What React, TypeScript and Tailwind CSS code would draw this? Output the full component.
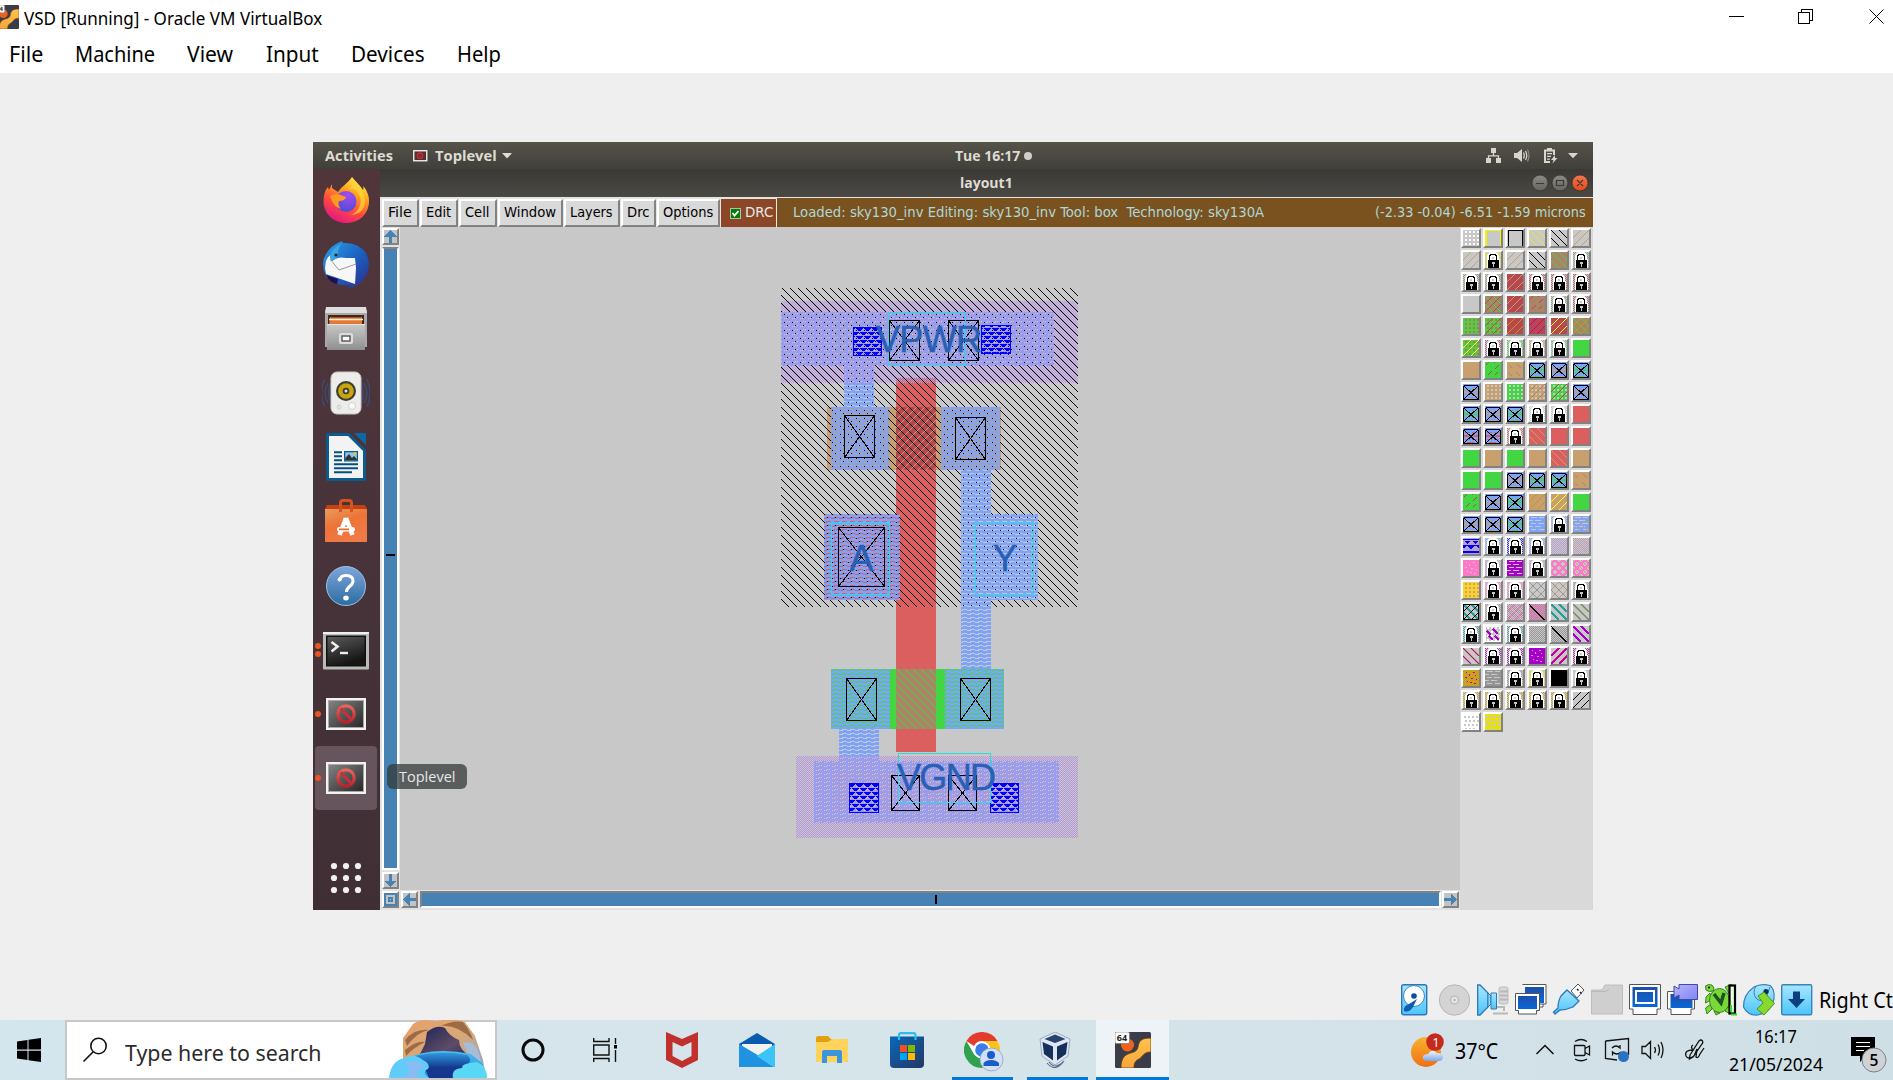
import React, { useLayoutEffect, useRef, useState } from "react";

/* ---------- shared helpers ---------- */

// One line of text stretched to an exact width.
function Fit({ w, className = "", children }: { w: number; className?: string; children: React.ReactNode }) {
  const ref = useRef<HTMLSpanElement>(null);
  const [k, setK] = useState(1);
  useLayoutEffect(() => {
    if (ref.current && ref.current.offsetWidth) setK(w / ref.current.offsetWidth);
  }, [w]);
  return (
    <span className={"inline-block shrink-0 text-left " + className} style={{ width: w }}>
      <span ref={ref} className="inline-block origin-left whitespace-nowrap" style={{ transform: `scaleX(${k})` }}>
        {children}
      </span>
    </span>
  );
}

const GREEN = "#42d742";
const TAN = "#c8a070";
const RED = "#dc5f5f";
const DARK = "#b84850";
const BROWN = "#a98467";
const BLUE = "#7ca4fc";
const GREY = "#c8c8c8";
const PURPLE = "#b696de";

function VBoxGuestIcon({ size, className = "" }: { size: number; className?: string }) {
  return (
    <svg width={size} height={size} viewBox="0 0 36 36" className={className}>
      <defs>
        <linearGradient id="gold" x1="0" y1="0" x2="0" y2="1">
          <stop offset="0" stopColor="#ffc24d" />
          <stop offset="1" stopColor="#f8a63c" />
        </linearGradient>
      </defs>
      <rect width="36" height="36" rx="1.5" fill="#3a3c47" />
      <circle cx="12.5" cy="13" r="6.5" fill="#f0621c" />
      <path d="M36 6C26 6 24 9 23 15C22 21 16 20 11 23C8 25 6 29 6 36H19C19 31 20 29 24 27C28 25 28 20 36 20Z" fill="url(#gold)" stroke="#6b3a12" strokeWidth=".8" />
      <rect x="0" y="0" width="14.5" height="11.5" rx="1.5" fill="#fff" stroke="#777" strokeWidth=".7" />
      <text x="1.8" y="9" fontSize="9" fontWeight="700" fontFamily="Open Sans, sans-serif" fill="#222">64</text>
    </svg>
  );
}

/* ---------- host window chrome ---------- */

function HostTitle() {
  return (
    <div className="flex h-[36px] items-start">
      <div className="mt-[5px] h-6 w-[19px] shrink-0 overflow-hidden">
        <VBoxGuestIcon size={24} className="-ml-[5px]" />
      </div>
      <Fit w={298} className="ml-[5px] mt-[5px] text-[17.5px] leading-[26px]">VSD [Running] - Oracle VM VirtualBox</Fit>
      <svg width="193" height="36" className="ml-auto" fill="none" stroke="#000" shapeRendering="crispEdges">
        <path d="M29 16.5H44" />
        <path d="M98.5 12.5H109.5V23.5H98.5Z M101.5 12V9.5H112.5V20.5H110" />
        <path d="M169.5 9.5L183.5 23.5M183.5 9.5L169.5 23.5" shapeRendering="auto" />
      </svg>
    </div>
  );
}

function HostMenu() {
  const items: [string, number, number][] = [
    ["File", 9, 34], ["Machine", 32, 80], ["View", 32, 46], ["Input", 33, 53], ["Devices", 32, 74], ["Help", 32, 44],
  ];
  return (
    <div className="flex h-[37px] items-center text-[21.5px]">
      {items.map(([t, gap, w]) => (
        <div key={t} className="flex" style={{ marginLeft: gap }}>
          <Fit w={w} className="leading-[28px] -mt-[2px]">{t}</Fit>
        </div>
      ))}
    </div>
  );
}

/* ---------- guest top bars ---------- */

function GuestTop() {
  return (
    <div className="grid h-[27px] grid-cols-[642px_77px_1fr] items-center bg-linear-to-b from-[#56534a] to-[#403f3a] font-['Open_Sans','Noto_Sans',sans-serif] text-[14px] font-bold text-[#dfdbd2]">
      <div className="flex items-center">
        <Fit w={68} className="ml-3 leading-5">Activities</Fit>
        <svg width="15" height="12" className="ml-5">
          <rect x=".75" y=".75" width="13" height="10" fill="#4a3434" stroke="#eee" strokeWidth="1.4" />
          <circle cx="7" cy="5.7" r="2.6" fill="none" stroke="#d0282c" strokeWidth="1.5" />
          <path d="M5.5 4L9 7.5" stroke="#d0282c" />
        </svg>
        <Fit w={62} className="ml-[7px] leading-5">Toplevel</Fit>
        <svg width="10" height="6" className="ml-[5px]"><path d="M0 0H10L5 5.5Z" fill="#dfdbd2" /></svg>
      </div>
      <div className="flex w-[77px] items-center">
        <Fit w={65} className="leading-5">Tue 16:17</Fit>
        <span className="ml-1 h-2 w-2 rounded-full bg-[#d0cdc6]" />
      </div>
      <div className="flex items-center justify-end pr-[15px]">
        <svg width="92" height="17" viewBox="0 0 92 17" fill="#d8d5ce">
          <path d="M5 1h5v5H5zM0 11h5v5H0zM10 11h5v5h-5z" />
          <path d="M7.5 6v3.500M2.500 11V8.800H12.500V11" fill="none" stroke="#d8d5ce" strokeWidth="1.300" />
          <path d="M28 6h3l5-4v13l-5-4h-3z" />
          <path d="M37.500 5.500q1.500 3 0 6M39.500 4q2.500 4.500 0 9" fill="none" stroke="#d8d5ce" strokeWidth="1.300" />
          <path d="M41.500 2.500q3 6 0 12" fill="none" stroke="#8a877f" strokeWidth="1.200" />
          <path d="M58 2.500h3V1h5v1.500h3V8h-2V4.500h-7V14h4v2h-6z M61 6h5v1.200h-5z M61 8.800h4V10h-4z M61 11.600h3v1.200h-3z M69 8l-4 5h2.500l-1 3.500 5-5.500h-2.500z" />
          <path d="M82 6H92L87 11.200Z" />
        </svg>
      </div>
    </div>
  );
}

function WinButtons() {
  return (
    <svg width="60" height="22" viewBox="1530 172 60 22" fill="none">
      <defs>
        <linearGradient id="wb" x1="0" y1="0" x2="0" y2="1"><stop offset="0" stopColor="#8b8983" /><stop offset="1" stopColor="#66645f" /></linearGradient>
        <linearGradient id="wr" x1="0" y1="0" x2="0" y2="1"><stop offset="0" stopColor="#f4774e" /><stop offset="1" stopColor="#e2491a" /></linearGradient>
      </defs>
      <circle cx="1540" cy="183" r="8" fill="url(#wb)" stroke="#33322e" strokeWidth=".8" />
      <circle cx="1560" cy="183" r="8" fill="url(#wb)" stroke="#33322e" strokeWidth=".8" />
      <circle cx="1580" cy="183" r="8" fill="url(#wr)" stroke="#33322e" strokeWidth=".8" />
      <path d="M1536 183.500h8M1556.500 180.500h7v5h-7zM1577 180l6 6M1583 180l-6 6" stroke="#3a3935" strokeWidth="1.200" />
    </svg>
  );
}

/* ---------- dock ---------- */

function ToplevelIcon() {
  return (
    <svg width="48" height="48">
      <defs>
        <linearGradient id="tl" x1="0" y1="0" x2="1" y2="1"><stop offset="0" stopColor="#828282" /><stop offset="1" stopColor="#282828" /></linearGradient>
        <linearGradient id="no" x1="0" y1="0" x2="0" y2="1"><stop offset="0" stopColor="#e8665a" /><stop offset="1" stopColor="#c01f2e" /></linearGradient>
      </defs>
      <rect x="4" y="8" width="40" height="32" fill="#f2f2f0" />
      <rect x="6" y="10" width="36" height="28" fill="#a9a9a9" />
      <rect x="7" y="11" width="34" height="26" fill="url(#tl)" />
      <circle cx="24" cy="24" r="8.200" fill="none" stroke="url(#no)" strokeWidth="3.200" />
      <path d="M18.500 18.500l11 11" stroke="#c92f38" strokeWidth="3" />
    </svg>
  );
}

const dockIcons: { lift: string; dots: number; icon: React.ReactNode }[] = [
  { lift: "pb-1", dots: 0, icon: (
    <svg width="48" height="48">
      <defs>
        <linearGradient id="ff" x1=".8" y1="0" x2=".3" y2="1"><stop offset="0" stopColor="#fff44f" /><stop offset=".35" stopColor="#ffa01e" /><stop offset=".65" stopColor="#ff4a3d" /><stop offset="1" stopColor="#e31587" /></linearGradient>
        <radialGradient id="fp" cx=".6" cy=".2" r=".9"><stop offset="0" stopColor="#a24cf5" /><stop offset="1" stopColor="#4a4ad0" /></radialGradient>
      </defs>
      <path d="M30 1C33 5 38 9 41 14C42 12 41 10 41 10C45 14 47 20 47 25C47 38 37 47 24.500 47C11 47 1.500 37 1.500 25C1.500 19 3 14 6 11L7 14L10 8V12L16 16C20 10 25 8 30 1Z" fill="url(#ff)" />
      <circle cx="24" cy="25.500" r="10.500" fill="url(#fp)" />
      <path d="M8 20Q14 17 19 19L24 21Q23 25 17 25Q15 28 19 33Q11 31 8 20Z" fill="#ff9a1f" />
      <path d="M24 14Q33 9 38 21Q41 33 29 39Q42 38 43 26Q43 14 33 5Q30 12 24 14Z" fill="#ffd83a" opacity=".7" />
    </svg>) },
  { lift: "pb-0.5", dots: 0, icon: (
    <svg width="48" height="48">
      <defs><linearGradient id="tb" x1="0" y1="0" x2="1" y2="1"><stop offset="0" stopColor="#2aa4e8" /><stop offset=".5" stopColor="#1c64c4" /><stop offset="1" stopColor="#2a2c8c" /></linearGradient></defs>
      <path d="M20 0L21 2Q36 1 44 12Q50 24 44 35Q37 47 24 47L30 44Q12 46 4 35Q-2 22 4 13Q8 5 20 0Z" fill="url(#tb)" />
      <path d="M4 34Q8 42 15 43L16 38Z" fill="#1d0f52" />
      <path d="M4 20Q6 15 9 14L10 20Q16 15 24 17L33 17L34 27L33 43L4 33L3 27Z" fill="#f7f7f7" />
      <path d="M8 18L17 29L34 23" fill="none" stroke="#9a9a9a" />
      <path d="M8 16Q8 8 20 2Q15 8 16 15Q12 20 9 20Z" fill="#3aa6e4" />
      <circle cx="14" cy="14" r="1.600" fill="#222" />
    </svg>) },
  { lift: "pb-0.5", dots: 0, icon: (
    <svg width="48" height="48">
      <defs><linearGradient id="fc" x1="0" y1="0" x2="0" y2="1"><stop offset="0" stopColor="#c9c9c9" /><stop offset="1" stopColor="#8f8f8f" /></linearGradient></defs>
      <path d="M5 3L6 2H42L45 6V42H3V6Z" fill="#a9a9a9" />
      <path d="M4 2H44L45 8H3Z" fill="#dedede" />
      <rect x="6" y="10" width="36" height="10" fill="#3a2a20" />
      <path d="M8 12H40V20H7Z" fill="#e07a35" /><path d="M7 14.500H41" stroke="#fff0dc" strokeWidth="1.500" /><path d="M9 12.500H39" stroke="#c04818" />
      <rect x="5" y="19" width="38" height="26" fill="url(#fc)" />
      <path d="M5 19.500H43" stroke="#e3e3e3" />
      <rect x="17" y="28" width="14" height="11" rx="2" fill="#ddd" />
      <rect x="20" y="31" width="8" height="5" fill="#fff" stroke="#555" strokeWidth="1.400" />
    </svg>) },
  { lift: "pb-0.5", dots: 0, icon: (
    <svg width="48" height="48">
      <path d="M6 14Q0 24 6 34M3 10Q-4 24 3 38M9 14Q4 24 9 34M42 14Q48 24 42 34M45 10Q51 24 45 38M39 14Q44 24 39 34" fill="none" stroke="#3d4a6c" strokeWidth="1.500" />
      <rect x="9" y="3" width="30" height="42" rx="6" fill="#ececea" stroke="#c9c9c5" />
      <circle cx="24" cy="22" r="10" fill="#3e3f35" /><circle cx="24" cy="22" r="7.800" fill="#c9a50e" /><circle cx="24" cy="22" r="3.300" fill="#3c3d38" /><circle cx="24" cy="22" r="1.500" fill="#ddd" />
      <circle cx="30" cy="37" r="3.500" fill="#fafafa" stroke="#d0d0cc" /><circle cx="17" cy="38" r="2" fill="#e2e2e0" stroke="#d0d0cc" />
    </svg>) },
  { lift: "pb-0.5", dots: 0, icon: (
    <svg width="48" height="48">
      <path d="M6 0H27L44 17V46Q44 48 42 48H6Q4 48 4 46V2Q4 0 6 0Z" fill="#0a5c8f" />
      <path d="M32 0H44V12Z" fill="#0b69a3" />
      <path d="M7 3H26L41 18V45H7Z" fill="#f3f3f3" />
      <path d="M12 19.200h8M12 23.200h8M12 27.200h8M12 31.200h24M12 35.200h24M12 39.200h18" stroke="#06507f" strokeWidth="2" />
      <rect x="22" y="18" width="14" height="10.500" fill="#0a5c8f" /><rect x="23.300" y="19.300" width="11.500" height="8" fill="#8ec7ea" />
      <path d="M23.300 27.300V25L27 21L30 25L32 23L34.800 26V27.300Z" fill="#333" /><circle cx="33" cy="20.500" r="1.500" fill="#e8c52c" />
    </svg>) },
  { lift: "pb-0.5", dots: 0, icon: (
    <svg width="48" height="48">
      <defs><linearGradient id="so" x1="0" y1="0" x2=".5" y2="1"><stop offset="0" stopColor="#e89b5c" /><stop offset=".5" stopColor="#ee7338" /><stop offset="1" stopColor="#f07a45" /></linearGradient></defs>
      <path d="M5 8H43L45 12H3Z" fill="#c4420f" />
      <rect x="3" y="12" width="42" height="33" fill="url(#so)" />
      <path d="M18.500 15V6Q18.500 3.500 21 3.500H27Q29.500 3.500 29.500 6V15" fill="none" stroke="#d4541f" strokeWidth="3" />
      <path d="M24 21L17.500 38M24 21L30.500 38" stroke="#fff" strokeWidth="4.500" />
      <rect x="15" y="30" width="18" height="4.600" rx="2.300" fill="#fff" /><rect x="17" y="31.500" width="10" height="1.700" fill="#ee6a2c" />
    </svg>) },
  { lift: "", dots: 0, icon: (
    <svg width="48" height="48">
      <defs><linearGradient id="hp" x1="0" y1="0" x2="0" y2="1"><stop offset="0" stopColor="#7fa6dc" /><stop offset="1" stopColor="#2c6c9f" /></linearGradient></defs>
      <circle cx="24" cy="24" r="19.500" fill="url(#hp)" stroke="#9cc0e6" strokeWidth="1" />
      <path d="M18 18Q18 13.500 24 13.500Q31 13.500 31 19Q31 22 27.500 24.500Q24.500 27 24.500 30" fill="none" stroke="#fff" strokeWidth="3" /><circle cx="17.600" cy="17.500" r="2" fill="#fff" />
      <ellipse cx="24" cy="36" rx="2.800" ry="2.500" fill="#fff" />
    </svg>) },
  { lift: "pt-px", dots: 2, icon: (
    <svg width="48" height="48">
      <defs><linearGradient id="te" x1="0" y1="0" x2=".4" y2="1"><stop offset="0" stopColor="#5a5a5a" /><stop offset="1" stopColor="#151515" /></linearGradient></defs>
      <rect x="1" y="5.500" width="46" height="37" rx="1" fill="#b9bcb6" /><path d="M1 6H47" stroke="#f0f0ee" strokeWidth="2" />
      <rect x="4" y="8.500" width="40" height="31" fill="#111" /><rect x="5.500" y="10" width="37" height="28" fill="url(#te)" />
      <path d="M9.500 15L15.500 19.500L9.500 24.500" fill="none" stroke="#eee" strokeWidth="2.600" /><path d="M18 26H26" stroke="#eee" strokeWidth="2.400" />
    </svg>) },
  { lift: "", dots: 1, icon: <ToplevelIcon /> },
  { lift: "", dots: 1, icon: <ToplevelIcon /> },
];

function Dock() {
  return (
    <div className="flex w-[67px] shrink-0 flex-col bg-linear-to-b from-[#50363b] via-[#48333a] to-[#3f2f35] pt-px">
      {dockIcons.map((d, i) => (
        <div key={i} className={"relative flex h-16 w-[62px] items-center justify-center rounded-[4px] ml-[2px] " + d.lift + (i === 9 ? " bg-[#67555d]" : "")}>
          <div className="absolute left-0 top-0 flex h-full flex-col items-center justify-center gap-[2px]">
            {Array.from({ length: d.dots }).map((_, k) => <span key={k} className="h-[6px] w-[6px] rounded-full bg-[#e95420]" />)}
          </div>
          {d.icon}
        </div>
      ))}
      <svg width="40" height="36" className="mt-[49px] ml-[13px]" fill="#f0f0f0">
        {[8, 20, 32].map((x) => [6, 18, 30].map((y) => <circle key={x + "-" + y} cx={x} cy={y + 1} r="3.100" />))}
      </svg>
    </div>
  );
}

/* ---------- layout drawing ---------- */

const px = (pts: [number, number, number?][]) => pts.map(([x, y, w = 1]) => `M${x} ${y}h${w}v1h${-w}z`).join("");
const diag = (off: number) => px(Array.from({ length: 8 }, (_, i) => [(i + off) % 8, i] as [number, number]));
const anti = (off: number) => px(Array.from({ length: 8 }, (_, i) => [(off - i + 16) % 8, i] as [number, number]));

function Metal({ x, y, w, h }: { x: number; y: number; w: number; h: number }) {
  return <rect x={x} y={y} width={w} height={h} fill="url(#m1)" />;
}
function Contact({ x, y, w, h }: { x: number; y: number; w: number; h: number }) {
  return <path d={`M${x + 0.5} ${y + 0.5}h${w - 1}v${h - 1}h${-(w - 1)}zl${w - 1} ${h - 1}M${x + w - 0.5} ${y + 0.5}L${x + 0.5} ${y + h - 0.5}`} fill="none" stroke="#000" />;
}
function Via({ x, y, w, h }: { x: number; y: number; w: number; h: number }) {
  return <rect x={x + 0.5} y={y + 0.5} width={w - 1} height={h - 1} fill="url(#via)" stroke="#0000ff" />;
}

function Canvas() {
  const label = { fontFamily: "Liberation Sans, Arial, sans-serif", fontSize: 36, fill: "#2a5fb6", stroke: "#2a5fb6", strokeWidth: 0.5 };
  return (
    <svg width="1060" height="663" viewBox="400 227 1060 663" className="block bg-[#c8c8c8]" shapeRendering="crispEdges">
      <defs>
        <pattern id="hatch" width="8" height="8" patternUnits="userSpaceOnUse"><path d={diag(6)} fill="#000" /></pattern>
        <pattern id="gdiag" width="8" height="8" patternUnits="userSpaceOnUse"><path d={diag(4)} fill={GREEN} /></pattern>
        <pattern id="tdiag" width="8" height="8" patternUnits="userSpaceOnUse"><path d={anti(3)} fill={TAN} /></pattern>
        <pattern id="m1" width="8" height="4" patternUnits="userSpaceOnUse">
          <path d={px([[0, 0, 8], [0, 1, 2], [7, 1, 1], [3, 2, 4], [0, 3, 8]])} fill={BLUE} />
        </pattern>
        <pattern id="m2" width="2" height="2" patternUnits="userSpaceOnUse"><path d={px([[1, 0], [0, 1]])} fill={PURPLE} /></pattern>
        <pattern id="via" width="8" height="8" patternUnits="userSpaceOnUse">
          <path d={px([[0, 0, 7], [1, 1, 5], [2, 2, 3], [4, 4, 4], [0, 4, 3], [5, 5, 3], [0, 5, 2], [6, 6, 2], [0, 6, 1]])} fill="#0000ff" />
        </pattern>
        <pattern id="gd" width="8" height="8" patternUnits="userSpaceOnUse"><path d={px([[1, 1], [5, 5]])} fill={GREEN} /></pattern>
        <pattern id="td" width="6" height="6" patternUnits="userSpaceOnUse"><path d={px([[1, 1], [4, 4]])} fill="#d89a80" /></pattern>
      </defs>
      <rect x="896" y="378" width="40" height="374" fill={RED} />
      <rect x="824" y="514" width="76" height="86" fill={RED} />
      <rect x="827" y="407" width="174" height="63" fill={TAN} />
      <rect x="896" y="407" width="40" height="63" fill={DARK} />
      <rect x="896" y="407" width="40" height="63" fill="url(#tdiag)" />
      <rect x="831" y="669" width="173" height="60" fill={GREEN} />
      <rect x="896" y="669" width="40" height="60" fill={BROWN} />
      <rect x="896" y="669" width="40" height="60" fill="url(#gdiag)" />
      <rect x="781" y="288" width="297" height="319" fill="url(#hatch)" />
      <Metal x={781} y={312} w={273} h={54} />
      <Metal x={844} y={366} w={30} h={41} />
      <Metal x={831} y={407} w={58} h={63} />
      <Metal x={941} y={407} w={59} h={63} />
      <Metal x={961} y={470} w={30} h={44} />
      <Metal x={961} y={514} w={77} h={86} />
      <Metal x={961} y={600} w={30} h={69} />
      <Metal x={824} y={514} w={76} h={86} />
      <Metal x={831} y={669} w={59} h={60} />
      <Metal x={945} y={669} w={59} h={60} />
      <Metal x={839} y={729} w={40} h={32} />
      <Metal x={814} y={761} w={245} h={62} />
      <rect x="781" y="301" width="297" height="82" fill="url(#m2)" />
      <rect x="796" y="756" width="282" height="82" fill="url(#m2)" />
      <rect x="835" y="323" width="183" height="34" fill="url(#gd)" />
      <rect x="835" y="775" width="197" height="36" fill="url(#td)" />
      <Via x={853} y={327} w={29} h={29} />
      <Via x={981} y={325} w={30} h={29} />
      <Via x={849} y={783} w={30} h={30} />
      <Via x={990} y={783} w={29} h={30} />
      <Contact x={889} y={320} w={31} h={41} />
      <Contact x={948} y={320} w={31} h={41} />
      <Contact x={844} y={415} w={31} h={43} />
      <Contact x={955} y={417} w={31} h={43} />
      <Contact x={838} y={527} w={47} h={60} />
      <Contact x={846} y={678} w={31} h={43} />
      <Contact x={960} y={678} w={31} h={43} />
      <Contact x={891} y={775} w={29} h={36} />
      <Contact x={948} y={775} w={29} h={36} />
      <g fill="none" stroke="#22e0e0">
        <rect x="888.500" y="313.500" width="77" height="52" />
        <rect x="831.500" y="522.500" width="58" height="72" />
        <rect x="975.500" y="522.500" width="58" height="72" />
        <rect x="898.500" y="753.500" width="92" height="49" />
      </g>
      <g {...label}>
        <text x="876" y="352" textLength="106">VPWR</text>
        <text x="849.500" y="571">A</text>
        <text x="993" y="571">Y</text>
        <text x="897" y="790" textLength="99">VGND</text>
      </g>
    </svg>
  );
}

/* ---------- layer palette ---------- */

type Cell = [string, string?, string?, string?];
const L = (c: string): Cell => ["l", GREY, c];
const X = (c: string): Cell => ["x", BLUE, c];
const S = (c: string): Cell => ["s", c];
const Y = "#f0ec10", K = "#000", MG = "#c8009a", PK = "#ff78c8", GO = "#c89a0a", TE = "#20a098", VI = "#a800c8", G8 = "#969696", PU = "#b8a0d0";

const cells: Cell[] = [
  ["d", GREY, "#fff"], ["e", GREY, "#f5f000"], ["e", GREY, K], ["b", GREY, Y], ["b", GREY, K], ["f", GREY, TAN],
  ["f", GREY, TAN], L(Y), ["f", GREY, TAN], ["b", GREY, K], ["b", BROWN, GREEN], L("#7aa070"),
  L("#8a9a70"), L("#8a9a70"), ["f", DARK, TAN], L(DARK), L(DARK), L(DARK),
  S(GREY), ["o", BROWN, GREEN, DARK], ["f", DARK, TAN], ["h", BROWN, DARK], L("#7aa070"), L(DARK),
  ["d", GREEN, RED], ["df", GREEN, RED, DARK], ["f", DARK, GO], ["f", DARK, MG], ["f", DARK, "#ffff20"], ["o", BROWN, GREEN, GO],
  ["df", GREEN, RED, "#ffff20"], L("#b04880"), L(GREEN), L(TAN), L("#60c880"), S(GREEN),
  S(TAN), ["h", GREEN, DARK], ["k", TAN, BROWN], X(GREEN), X(TAN), X(GREEN),
  X(TAN), ["d", TAN, GREY], ["d", GREEN, GREY], ["df", TAN, GREY, BROWN], ["df", GREEN, GREY, DARK], X(TAN),
  X(GREEN), X(TAN), X(GREEN), L("#fff"), L("#e8e8e8"), S(RED),
  X(RED), X(RED), L(RED), ["b", RED, TAN], S(RED), S(RED),
  S(GREEN), S(TAN), S(GREEN), S(TAN), ["b", RED, TAN], S(TAN),
  S(GREEN), S(GREEN), X(TAN), X(GREEN), X(GREEN), ["k", TAN, BROWN],
  ["h", GREEN, DARK], X(TAN), X(GREEN), ["f", TAN, GO], ["f", TAN, "#ffff20"], S(GREEN),
  X(TAN), X(TAN), X(GREEN), ["m", BLUE, GREY], L(BLUE), ["mb", BLUE, GREY, TAN],
  ["v", PU, "#0000ff"], L(BLUE), L("#0000ff"), L(BLUE), ["c", GREY, PU], ["cb", GREY, PU, TAN],
  ["d2", PK, GREY], L(PU), ["m", VI, GREY], L(PU), ["O", GREY, PK], ["Ob", GREY, PK, TAN],
  ["d", "#e8e010", PK], L(PK), L(PK), ["o", GREY, G8, G8], ["o", GREY, G8, TAN], L(G8),
  ["eo", GREY, K, TE], L(G8), ["co", GREY, G8, PK], ["c1", PK, G8, K], ["B", GREY, TE], ["Bb", GREY, TE, TAN],
  L(TE), ["q", GREY, "#fff", VI], L(TE), ["c", GREY, G8], ["c1", GREY, G8, K], ["B", GREY, VI],
  ["Bb", GREY, VI, TAN], L(VI), L(VI), ["d2", VI, PU], ["F", GREY, MG], L(MG),
  ["d3", GO, MG, "#d8c080"], ["m", G8, GREY], L(G8), L(Y), S(K), L(GREY),
  L(GO), L(GO), L(GO), L(GO), L(GO), ["f", GREY, K],
  ["d4", "#fff", GREY], ["d4", "#e8e010", GREY],
];

const BACK = "M0 0L16 16M8 0L16 8M0 8L8 16";
const FWD = "M16 0L0 16M8 0L0 8M16 8L8 16";
const dots = [1, 5, 9, 13].map((y) => [2, 6, 10, 14].map((x) => `M${x} ${y}h2v2h-2z`).join("")).join("");
const stagger = [2, 6, 10].map((y, r) => [1, 5, 9, 13].map((x) => `M${x + (r % 2)} ${y}h2v2h-2z`).join("")).join("") + "M2 14h2v1h-2zM6 14h2v1h-2zM10 14h2v1h-2z";
const checks = px(Array.from({ length: 128 }, (_, i) => [((i % 8) * 2 + (Math.floor(i / 8) % 2)), Math.floor(i / 8)] as [number, number]));
const dash = px([[2, 1, 6], [10, 1, 5], [0, 4, 4], [6, 4, 6], [2, 7, 5], [9, 7, 6], [0, 10, 4], [6, 10, 6], [2, 13, 5], [10, 13, 5]]);
const dashThick = px([[2, 4, 5], [9, 4, 5], [1, 7, 4], [11, 7, 4], [1, 8, 5], [10, 8, 5], [2, 11, 5], [9, 11, 5], [4, 14, 7]]);
const specks = "M3 2h1v1h-1zM10 2h2v1h-2zM6 4h1v2h-1zM12 5h1v1h-1zM2 7h2v1h-2zM8 8h2v1h-2zM13 9h1v1h-1zM4 11h1v1h-1zM7 12h2v1h-2zM11 13h2v1h-2z";

function Swatch({ cell }: { cell: Cell }) {
  const [k, bg = GREY, c = K, c2 = K] = cell;
  const line = (d: string, s: string, w = 1) => <path d={d} stroke={s} strokeWidth={w} fill="none" />;
  return (
    <svg width="20" height="20" viewBox="0 0 16 16" className="block h-5 w-5 border-2 border-b-[#828282] border-l-white border-r-[#828282] border-t-white" shapeRendering="crispEdges">
      <rect width="16" height="16" fill={bg} />
      {(k === "d" || k === "df") && <path d={dots} fill={c} />}
      {k === "d4" && <path d={stagger} fill={c} />}
      {k === "q" && <><path d={dots} fill={c} />{line("M0 .5H16M.5 0V16M15.500 0V16M0 15.500H16", c)}{line("M2 5l4 4M8 3l5 5M4 10l4 4M10 10l4 4", c2, 1.600)}</>}
      {k === "df" && line(FWD, c2)}
      {k === "e" && line("M1 16V.5H15.500V16", c, c === K ? 1 : 1.6)}
      {k === "f" && line(FWD, c)}
      {k === "b" && line(BACK, c)}
      {k === "B" && line(BACK, c, 1.600)}
      {k === "F" && line(FWD, c, 1.600)}
      {k === "Bb" && <>{line(BACK, c2, 2.600)}{line(BACK, c, 1.300)}</>}
      {k === "h" && line("M3 13l4-4M10 7l4-4M10 13l3-3M1 3l3-3M9 1l1-1", c)}
      {k === "k" && line("M2 3l3 3M9 10l4 4M10 2l4 4M2 11l3 3", c)}
      {k === "o" && <>{line(FWD, c2)}{line(BACK, c)}</>}
      {(k === "O" || k === "Ob") && <>{k === "Ob" && line(BACK, c2)}<path d="M4 0l4 4l-4 4l-4-4zM12 0l4 4l-4 4l-4-4zM4 8l4 4l-4 4l-4-4zM12 8l4 4l-4 4l-4-4z" fill="none" stroke={c} strokeWidth="1.600" /></>}
      {(k === "m" || k === "mb") && <path d={dash} fill={c} />}
      {k === "mb" && line(BACK, c2)}
      {(k === "c" || k === "cb" || k === "co" || k === "c1") && <path d={checks} fill={c} />}
      {k === "cb" && line(BACK, c2)}
      {k === "co" && <>{line(BACK, c2)}{line(FWD, c2)}</>}
      {k === "c1" && line("M0 0L16 16", c2, 1.400)}
      {k === "d2" && <path d={specks} fill={c} />}
      {k === "d3" && <><path d={checks} fill={c2} opacity=".35" /><path d={specks} fill={c} /></>}
      {k === "eo" && <>{line(BACK, c2, 1.500)}{line(FWD, c)}{line("M.5 .5H15.500V15.500H.5Z", c)}</>}
      {k === "v" && <path d="M0 1h16v1h-16zM1 3h6l-3 3zM9 3h6l-3 3zM0 7h16v1h-16zM0 8h3l-2 3zM5 8h6l-3 4zM13 8h3v3zM0 13h16v2h-16z" fill={c} />}
      {k === "x" && <><path d={dashThick} fill={c} />{line("M1 1.500H15M.5 1.500V15.500H15.500V1.500M1 2L15 15M15 2L1 15", K)}</>}
      {k === "l" && (
        <>
          <path d={checks} fill={c} opacity=".75" />
          <rect x="3" y="1" width="10" height="14" fill={GREY} />
          <path d="M3.500 8V5Q3.500 1 8 1Q12.500 1 12.500 5V8" fill="none" stroke="#fff" strokeWidth="3" shapeRendering="auto" />
          <rect x="1.500" y="7" width="13" height="9" fill="#fff" />
          <path d="M5 8V5.500Q5 3.500 8 3.500Q11 3.500 11 5.500V8" fill="none" stroke="#fff" strokeWidth="3.500" />
          <path d="M4.500 8V5Q4.500 2.500 8 2.500Q11.500 2.500 11.500 5V8" fill="none" stroke="#000" strokeWidth="1.300" />
          <rect x="2.500" y="8" width="11" height="8" fill="#000" />
          <path d="M7 9.500h3v2h-1v3h-1v-3h-1z" fill={GREY} />
        </>
      )}
    </svg>
  );
}

/* ---------- scroll bar pieces ---------- */

function ArrowBox({ rot, box = false }: { rot: number; box?: boolean }) {
  return (
    <div className="h-[17px] w-[17px] shrink-0 border-2 border-b-[#828282] border-l-white border-r-[#828282] border-t-white bg-[#c3c3c3]">
      <svg width="13" height="13" viewBox="0 0 13 13" shapeRendering="crispEdges">
        {box ? (
          <g fill="none" stroke="#4682b4"><path d="M1 1h11v11H1z" strokeWidth="2" /><path d="M5 5h3v3H5z" strokeWidth="1.600" /></g>
        ) : (
          <path transform={`rotate(${rot} 6.5 6.5)`} d="M6.500 0L13 6.500H8V13H5V6.500H0Z" fill="#4682b4" />
        )}
      </svg>
    </div>
  );
}

function MenuButtons() {
  const items: [string, number, number][] = [
    ["File", 38, 24], ["Edit", 39, 25], ["Cell", 39, 24], ["Window", 66, 52], ["Layers", 57, 43], ["Drc", 36, 22], ["Options", 64, 50],
  ];
  return (
    <div className="flex h-[30px] items-stretch border-t border-[#e4e4e4] bg-[#e4e4e4] pl-[2px] font-['DejaVu_Sans_Condensed','DejaVu_Sans',sans-serif] text-[13.3px]">
      {items.map(([t, w, tw]) => (
        <div key={t} className="pr-px pt-px" style={{ width: w }}>
          <div className="flex h-[28px] items-center border-2 border-b-[#828282] border-l-white border-r-[#828282] border-t-white bg-[#d9d9d9] pl-1 text-black">
            <Fit w={tw} className="leading-4">{t}</Fit>
          </div>
        </div>
      ))}
      <div className="mt-px flex h-[28px] w-[55px] items-center bg-[#8b4726] pl-[9px]">
        <svg width="11" height="11" className="shrink-0"><rect x=".5" y=".5" width="10" height="10" fill="#008000" stroke="#b8b8b8" /><path d="M2.500 5L4.500 7.500L8.500 3" fill="none" stroke="#fff" strokeWidth="1.800" /></svg>
        <Fit w={28} className="ml-[4px] leading-4 text-[#e8e8e8]">DRC</Fit>
      </div>
      <div className="ml-px flex flex-1 items-center bg-[#7a5220] text-[#add8d8]">
        <Fit w={471} className="ml-[16px] leading-4">Loaded: sky130_inv Editing: sky130_inv Tool: box{"\u00a0"} Technology: sky130A</Fit>
        <Fit w={211} className="ml-auto mr-[7px] leading-4">(-2.33 -0.04) -6.51 -1.59 microns</Fit>
      </div>
    </div>
  );
}

function Magic() {
  return (
    <div className="flex h-[741px] w-[1213px] flex-col bg-[#d9d9d9]">
      <div className="relative flex h-[28px] shrink-0 items-center justify-end bg-linear-to-b from-[#3a3935] to-[#4b4944] pr-[3px]">
        <Fit w={53} className="mr-[517px] -mt-[1px] font-['Open_Sans','Noto_Sans',sans-serif] text-[14px] font-bold leading-5 text-[#dfdbd2]">layout1</Fit>
        <WinButtons />
      </div>
      <MenuButtons />
      <div className="flex h-[683px]">
        <div className="flex w-[1080px] flex-col">
          <div className="flex h-[663px]">
            <div className="flex w-5 flex-col items-start bg-[#e2e2e2] pl-[2px] pt-px">
              <ArrowBox rot={0} />
              <div className="mt-[2px] flex h-[623px] w-[17px] items-center justify-center border-x-2 border-b-2 border-t-2 border-b-white border-l-white border-r-white border-t-[#828282] bg-[#4682b4]">
                <span className="-mt-[8px] h-[2px] w-[9px] bg-black" />
              </div>
              <div className="mt-[2px]"><ArrowBox rot={180} /></div>
            </div>
            <Canvas />
          </div>
          <div className="flex h-5 items-start bg-[#e2e2e2] pl-[2px] pt-px">
            <ArrowBox rot={0} box />
            <div className="ml-[2px]"><ArrowBox rot={270} /></div>
            <div className="ml-[2px] flex h-[17px] w-[1021px] items-center justify-center border-2 border-b-white border-l-[#828282] border-r-white border-t-[#828282] bg-[#4682b4]">
              <span className="ml-[11px] h-[9px] w-[2px] bg-black" />
            </div>
            <div className="ml-px"><ArrowBox rot={90} /></div>
          </div>
        </div>
        <div className="grid w-[132px] content-start grid-cols-[repeat(6,20px)] gap-[2px] pl-px pt-px">
          {cells.map((c, i) => <Swatch key={i} cell={c} />)}
        </div>
      </div>
    </div>
  );
}

/* ---------- VirtualBox status row ---------- */

function StatusIcons() {
  return (
    <svg width="416" height="36" viewBox="1400 982 416 36">
      <defs>
        <linearGradient id="sky" x1="0" y1="0" x2="0" y2="1"><stop offset="0" stopColor="#a8e6ff" /><stop offset="1" stopColor="#4cc4fa" /></linearGradient>
        <linearGradient id="navy" x1="0" y1="0" x2="0" y2="1"><stop offset="0" stopColor="#1d4fa8" /><stop offset="1" stopColor="#0868d8" /></linearGradient>
        <linearGradient id="lav" x1="0" y1="0" x2="1" y2="1"><stop offset="0" stopColor="#b9b2ff" /><stop offset="1" stopColor="#7f86f0" /></linearGradient>
      </defs>
      <rect x="1401.700" y="984.700" width="25" height="30" rx="2" fill="url(#sky)" stroke="#2a78b8" strokeWidth="1.400" />
      <circle cx="1414" cy="996" r="10.500" fill="#fff" stroke="#3a88c0" /><circle cx="1414" cy="996" r="2.800" fill="#0b4f9c" />
      <path d="M1404 1011Q1403 1006 1409 1004L1417 999L1413 1007Q1409 1013 1404 1011Z" fill="#0e5cb0" />
      <circle cx="1454.500" cy="1000" r="15.200" fill="#d4d4d4" stroke="#b5b5b5" /><circle cx="1454.500" cy="1000" r="4" fill="#e6e6e6" stroke="#b0b0b0" /><circle cx="1454.500" cy="1000" r="1.300" fill="#bbb" />
      <rect x="1499" y="987" width="9" height="17" rx="2" fill="#d8d8d8" stroke="#bbb" /><path d="M1496 998V1007H1504V1011M1493 1013.500H1508M1500 991.500H1508M1500 995.500H1508M1500 999.500H1508" fill="none" stroke="#b8b8b8" strokeWidth="2" />
      <path d="M1477.700 985H1480L1488 993V1007L1480 1015H1477.700Z" fill="url(#sky)" stroke="#2a78b8" strokeWidth="1.300" /><path d="M1488 993L1491 996V1004L1488 1007Z" fill="#8fdcff" stroke="#2a78b8" /><path d="M1491 993H1496.500V1009H1491Z" fill="url(#sky)" stroke="#2a78b8" />
      <path d="M1522.500 984.500H1546V1004H1540M1543 1004V1007H1538" fill="#fff" stroke="#555" /><rect x="1525" y="987" width="19" height="16" fill="url(#navy)" />
      <path d="M1515.500 993.500H1539.500V1010.500H1536.500V1014H1518.500V1010.500H1515.500Z" fill="#fff" stroke="#555" /><rect x="1518" y="996" width="19" height="13" fill="url(#navy)" />
      <path d="M1571 991L1578 984L1584 990L1577 998Z" fill="#fff" stroke="#555" /><path d="M1577 989l1.500 1.500M1580 992l1.500 1.500" stroke="#222" strokeWidth="1.600" />
      <path d="M1567 990L1579 1001L1573 1007Q1566 1010 1560 1010L1555 1014L1553.500 1012L1558 1008Q1558 1001 1561 996Z" fill="url(#sky)" stroke="#2a78b8" strokeWidth="1.300" />
      <path d="M1591.500 990H1602L1605 985H1622.500V1014H1591.500Z" fill="#cfcfcf" stroke="#bdbdbd" /><path d="M1591.500 991.500H1606L1609 989" fill="none" stroke="#b8b8b8" />
      <path d="M1629.500 984.500H1660.500V1009H1657V1014.500H1633V1009H1629.500Z" fill="#fff" stroke="#555" /><rect x="1632.500" y="987" width="25" height="20" fill="url(#navy)" /><rect x="1636" y="991" width="18" height="12" fill="none" stroke="#fff" strokeWidth="2" />
      <path d="M1667.500 991.500H1694.500V1009H1691V1014.500H1671V1009H1667.500Z" fill="#fff" stroke="#555" /><rect x="1670.500" y="994" width="22" height="14" fill="url(#navy)" />
      <path d="M1679 984.500H1697.500V999.500H1679V995L1674 998V986L1679 989Z" fill="url(#lav)" stroke="#4548a0" />
      <g fill="#7ad838" stroke="#2c7a16" strokeWidth=".9">
        <path d="M1711 1004L1705.500 1008L1707 1014L1712 1009ZM1727 1006L1732 1010L1730 1014L1725 1011ZM1714 1011L1716 1015L1720 1013ZM1725 987L1731 984.500L1735 988L1730 995ZM1710 993L1706 997L1705.500 1003L1711 1000Z" />
        <ellipse cx="1719.500" cy="1000.500" rx="10" ry="12" /><path d="M1705.500 986Q1708 983.500 1712 985Q1715 988 1713.500 991Q1709 992.500 1706 990Z" />
      </g>
      <path d="M1714 994L1721 1003L1724 993" fill="none" stroke="#1a5420" strokeWidth="3.500" /><circle cx="1709" cy="987.500" r="1.100" fill="#111" />
      <rect x="1729.500" y="985.500" width="5.500" height="28" fill="#e8ffe0" stroke="#000" strokeWidth="2.200" /><path d="M1731 1014.500H1737M1731 1005V1012" stroke="#2be51c" strokeWidth="2" />
      <path d="M1743.500 1007Q1743 995 1754 987Q1761 983 1770 985.500Q1775 989 1774 999Q1771 1012 1758 1015Q1748 1016 1743.500 1007Z" fill="url(#sky)" stroke="#3580b4" strokeWidth="1.200" />
      <path d="M1756 986Q1752 993 1756 998Q1760 1003 1766 998L1770 987" fill="none" stroke="#3580b4" /><circle cx="1766" cy="991.500" r="2.600" fill="#08305a" />
      <path d="M1758 996L1764 992L1774.500 1003.500L1764 1015L1757 1009L1763 1003Z" fill="#85d92f" stroke="#4b931a" />
      <rect x="1781.700" y="984.700" width="30" height="30" rx="1.500" fill="url(#sky)" stroke="#3784b8" strokeWidth="1.400" />
      <path d="M1793 991.500H1800V999H1805L1796.500 1008L1788 999H1793Z" fill="#0d3f80" />
    </svg>
  );
}

/* ---------- taskbar ---------- */

function SearchArt() {
  return (
    <svg width="98" height="58" viewBox="388 1022 98 58" className="ml-auto self-end">
      <defs>
        <linearGradient id="rock" x1="0" y1="0" x2="1" y2="1"><stop offset="0" stopColor="#e8a06a" /><stop offset=".5" stopColor="#d8a878" /><stop offset="1" stopColor="#7fa8d8" /></linearGradient>
        <linearGradient id="cave" x1="0" y1="0" x2="1" y2="1"><stop offset="0" stopColor="#1c2458" /><stop offset=".6" stopColor="#5f4c66" /><stop offset="1" stopColor="#1a2a6a" /></linearGradient>
        <linearGradient id="sea" x1="0" y1="0" x2="0" y2="1"><stop offset="0" stopColor="#4ac0ee" /><stop offset="1" stopColor="#2a86dc" /></linearGradient>
        <linearGradient id="deep" x1="0" y1="0" x2="0" y2="1"><stop offset="0" stopColor="#2f9ae0" /><stop offset=".6" stopColor="#14368c" /></linearGradient>
      </defs>
      <path d="M402 1080V1040L412 1026Q420 1020 434 1023Q456 1020 464 1024L474 1038L482 1062L485 1080Z" fill="url(#rock)" />
      <path d="M404 1042Q414 1030 428 1032Q416 1034 406 1048ZM404 1052Q416 1042 424 1044Q412 1050 405 1058ZM440 1028Q452 1022 462 1024Q470 1034 472 1042Q456 1026 440 1028Z" fill="#8a5f3c" opacity=".8" />
      <path d="M462 1045Q476 1040 480 1064L470 1062Z" fill="#a8bcd8" />
      <path d="M418 1058L424 1046L426 1034Q436 1026 444 1030Q448 1038 458 1042Q458 1052 469 1058L460 1062H418Z" fill="url(#cave)" />
      <path d="M402 1062Q430 1048 470 1056L482 1066V1080H402Z" fill="url(#sea)" />
      <path d="M414 1058Q440 1052 466 1057Q474 1064 462 1068L452 1080H428Q424 1068 414 1058Z" fill="url(#deep)" />
      <path d="M388 1080Q390 1062 404 1060Q412 1054 422 1062Q430 1066 427 1071Q420 1074 428 1080Z" fill="#62ccf8" /><path d="M404 1064Q420 1062 424 1070Q412 1070 418 1080H402Q414 1074 404 1064Z" fill="#9cb4f0" opacity=".7" />
      <path d="M452 1080Q450 1070 462 1070Q458 1066 476 1064Q486 1068 486 1080Z" fill="#58d8f4" />
    </svg>
  );
}

function AppSlot({ w, active = false, open = false, ml = 0, children }: { w: number; active?: boolean; open?: boolean; ml?: number; children: React.ReactNode }) {
  return (
    <div className={"flex h-[60px] shrink-0 flex-col items-center justify-between " + (active ? "bg-[#eef3f7]" : "")} style={{ width: w, marginLeft: ml }}>
      <div className="flex h-[57px] items-center pt-[3px]">{children}</div>
      <div className={"h-[3px] w-full " + (open ? "bg-[#0078d7]" : "")} />
    </div>
  );
}

function Taskbar() {
  return (
    <div className="flex h-[60px] shrink-0 items-center bg-linear-to-r from-[#d3e5ed] via-[#d6e5ea] to-[#cfdfe6]">
      <div className="flex w-[65px] shrink-0 justify-center pr-[7px]">
        <svg width="24" height="24" fill="#000"><path d="M0 3.500L10.500 2V11.500H0ZM11.500 1.800L24 0V11.500H11.500ZM0 12.700H10.500V22L0 20.500ZM11.500 12.700H24V24L11.500 22.200Z" /></svg>
      </div>
      <div className="flex h-[60px] w-[432px] shrink-0 items-center border-2 border-[#c8c8c8] bg-white pr-[8px]">
        <svg width="26" height="26" className="ml-[15px]" fill="none" stroke="#111" strokeWidth="1.600"><circle cx="16.500" cy="9" r="7.700" /><path d="M11 15L1.500 24.500" /></svg>
        <Fit w={197} className="ml-[17px] text-[22px] leading-8 text-[#2b2b2b] mt-[3px]">Type here to search</Fit>
        <SearchArt />
      </div>
      <svg width="26" height="26" className="ml-[23px] shrink-0"><circle cx="13" cy="13" r="10" fill="none" stroke="#0a0a0a" strokeWidth="3" /></svg>
      <svg width="26" height="24" className="ml-[47px] shrink-0" fill="none" stroke="#111" strokeWidth="1.400">
        <path d="M.7 0V3.500H16V0M.7 7H16V17H.7ZM.7 24V20.500H16V24M22.500 0V6M22.500 12V24" /><rect x="21" y="7" width="3" height="3.500" fill="#000" stroke="none" />
      </svg>
      <AppSlot w={60} ml={33}>
        <svg width="32" height="36"><path d="M0 0L16 7L32 0V28L16 36L0 28ZM6.500 10V24L16 29L25.500 24V10L16 14.500Z" fill="#c0302c" fillRule="evenodd" /></svg>
      </AppSlot>
      <AppSlot w={60} ml={15}>
        <svg width="36" height="34">
          <path d="M0 11L18 0L36 11V22H0Z" fill="#0a5cae" /><path d="M3 11H33V24L18 30L3 22Z" fill="#f2f2f2" />
          <path d="M0 11L22 24L36 34H0Z" fill="#1e96e4" /><path d="M36 11L16 24L34 34H36Z" fill="#3cc4f8" /><path d="M0 11L34 34H0Z" fill="#1f93e2" />
        </svg>
      </AppSlot>
      <AppSlot w={60} ml={15}>
        <svg width="32" height="28"><path d="M0 2Q0 0 2 0H12L15 3H30Q32 3 32 5V24Q32 26 30 26H2Q0 26 0 24Z" fill="#e0a010" /><path d="M0 6H12L16 3H30Q32 3 32 5V24Q32 26 30 26H2Q0 26 0 24Z" fill="#ffd35c" /><path d="M6 16Q6 14 8 14H24Q26 14 26 16V27H21V20H11V27H6Z" fill="#3c96dc" /></svg>
      </AppSlot>
      <AppSlot w={60} ml={15}>
        <svg width="36" height="36">
          <defs><linearGradient id="st" x1="0" y1="0" x2="1" y2="1"><stop offset="0" stopColor="#0a68b8" /><stop offset="1" stopColor="#243866" /></linearGradient></defs>
          <path d="M1 4.500H35V32Q35 36 31 36H5Q1 36 1 32Z" fill="url(#st)" /><path d="M10 8V3Q10 1.200 12 1.200H24.500Q26.500 1.200 26.500 3V8" fill="none" stroke="#28c0f4" strokeWidth="2.200" />
          <path d="M11 13h7v7h-7z" fill="#f25022" /><path d="M19 13h7v7h-7z" fill="#7fba00" /><path d="M11 21h7v7h-7z" fill="#00a4ef" /><path d="M19 21h7v7h-7z" fill="#ffb900" />
        </svg>
      </AppSlot>
      <AppSlot w={61} ml={15} open>
        <svg width="40" height="40" className="ml-[3px] mt-[3px]">
          <circle cx="18" cy="18" r="18" fill="#fff" /><path d="M2.400 9A18 18 0 0 1 33.600 9H18A9 9 0 0 0 10 14Z" fill="#e33b2e" />
          <path d="M33.600 9A18 18 0 0 1 18 36L26 22Q28 13 18 9Z" fill="#fcc31e" /><path d="M2.400 9A18 18 0 0 0 18 36L25.500 23Q18 30 10.200 22.500Z" fill="#30a14e" />
          <circle cx="18" cy="18" r="8.500" fill="#fff" /><circle cx="18" cy="18" r="6.800" fill="#3a7de8" />
          <circle cx="27.500" cy="27.500" r="11.500" fill="#d3e0fb" stroke="#8fa0b8" strokeWidth=".8" /><circle cx="27" cy="23" r="4" fill="#1a5cc8" /><path d="M19.500 34V31Q22 28 27 28Q32 28 35 31V34Z" fill="#1a5cc8" />
        </svg>
      </AppSlot>
      <AppSlot w={61} ml={14} open>
        <svg width="32" height="36" className="mr-[5px]">
          <path d="M10 30Q16 38 24 30M8 31Q16 41 25 29" fill="none" stroke="#5a6a8c" strokeWidth="1.200" />
          <path d="M16 0L31 7L29 24L16 33L3 24L1 7Z" fill="#dfe6f2" stroke="#8090b0" strokeWidth=".7" />
          <path d="M16 2.500L26.500 7L16 11L5.500 7Z" fill="#24436e" /><path d="M3.500 10L14 14.500V28.500L5 22Z" fill="#16305c" /><path d="M28.500 10L18 14.500V28.500L27 22Z" fill="#16305c" />
        </svg>
      </AppSlot>
      <AppSlot w={73} ml={8} active open><VBoxGuestIcon size={36} /></AppSlot>

      <div className="flex flex-1 items-center justify-end">
        <svg width="36" height="34" className="mr-[9px]">
          <defs><linearGradient id="sun" x1="0" y1="0" x2="0" y2="1"><stop offset="0" stopColor="#f9b233" /><stop offset="1" stopColor="#f0700e" /></linearGradient><linearGradient id="cl" x1="0" y1="0" x2="0" y2="1"><stop offset="0" stopColor="#f4f8ff" /><stop offset="1" stopColor="#7ea6e8" /></linearGradient></defs>
          <circle cx="16" cy="19" r="15" fill="url(#sun)" /><path d="M16 28Q12 27 13 23Q15 21 18 21Q22 15 27 20Q34 20 33 25Q32 28 29 28Z" fill="url(#cl)" />
          <circle cx="25" cy="9" r="8.800" fill="#c42b1c" /><text x="22.200" y="14" fontSize="13" fill="#fff" fontFamily="Open Sans, sans-serif">1</text>
        </svg>
        <Fit w={43} className="mr-[37px] mt-[2px] text-[21px] leading-7">37°C</Fit>
        <svg width="208" height="28" viewBox="1535 1036 208 28" className="-mr-[15px]" fill="none" stroke="#111" strokeWidth="1.500">
          <path d="M1536.500 1054L1545 1045.500L1553.500 1054" />
          <path d="M1574.500 1045.500H1584Q1585 1045.500 1585 1046.500V1054.500Q1585 1055.500 1584 1055.500H1575.500Q1574.500 1055.500 1574.500 1054.500ZM1585 1048.500L1589.500 1046V1055L1585 1052.500M1575 1041.500Q1581 1037.500 1587 1041.500M1575 1059Q1581 1062.500 1587 1059" strokeWidth="1.300" />
          <path d="M1605.500 1041L1628.500 1038.500V1055M1605.500 1041V1058.500L1617 1060" strokeWidth="1.300" />
          <path d="M1612 1048Q1616 1044 1620 1048V1045M1621 1052Q1617 1056 1612.500 1052V1055.500" strokeWidth="1.300" /><circle cx="1623.500" cy="1056.500" r="5.500" fill="#2b72c0" stroke="none" />
          <path d="M1642 1046.500H1645.500L1650.500 1041.500V1058.500L1645.500 1053.500H1642ZM1654.500 1047Q1656.500 1050 1654.500 1053M1658 1044.500Q1661 1050 1658 1055.500M1661 1042Q1665 1050 1661 1058" strokeWidth="1.300" />
          <path d="M1690 1055L1699 1041Q1701 1039 1702.500 1041Q1703.500 1042.500 1702 1044L1693 1057L1689.500 1059ZM1693 1045Q1690 1047 1693 1050Q1684 1050 1686 1056Q1688 1060 1694 1056L1697 1049L1696 1057Q1698 1059 1700 1054L1704 1048" strokeWidth="1.300" />
        </svg>
        <div className="flex w-[96px] flex-col items-center text-[17.5px] leading-[28px]">
          <Fit w={42}>16:17</Fit>
          <Fit w={94}>21/05/2024</Fit>
        </div>
        <svg width="40" height="40" className="ml-[26px] mr-[3px] mt-[8px]">
          <path d="M1 3H25V22H16L10 28V22H1Z" fill="#000" /><path d="M6 8.500H20M6 12.500H20M6 16.500H14" stroke="#fff" strokeWidth="1.200" />
          <circle cx="24" cy="26" r="12" fill="#cfd2d4" stroke="#7d8286" /><text x="19.600" y="31.500" fontSize="15.500" fontWeight="600" fontFamily="Open Sans, sans-serif" fill="#000">5</text>
        </svg>
      </div>
    </div>
  );
}

export default function App() {
  return (
    <div className="flex h-[1080px] w-[1893px] flex-col overflow-hidden bg-[#efefef] font-['Noto_Sans','Open_Sans',sans-serif] text-black">
      <div className="h-[73px] shrink-0 bg-white">
        <HostTitle />
        <HostMenu />
      </div>
      <div className="flex h-[947px] flex-col">
        <div className="relative ml-[313px] mt-[69px] h-[768px] w-[1280px] shrink-0">
          <GuestTop />
          <div className="flex h-[741px]">
            <Dock />
            <Magic />
          </div>
          <div className="absolute left-[74px] top-[622px] flex h-[25px] w-20 items-center justify-center rounded-[6px] bg-[#343a3a]/75 font-['Open_Sans','Noto_Sans',sans-serif] text-[14px] text-[#e8e8e8]">
            <Fit w={56} className="leading-5">Toplevel</Fit>
          </div>
        </div>
        <div className="mt-[72px] flex h-9 items-center justify-end overflow-hidden">
          <StatusIcons />
          <div className="ml-[3px] w-[74px] overflow-hidden">
            <Fit w={87} className="text-[21px] leading-8">Right Ctrl</Fit>
          </div>
        </div>
      </div>
      <Taskbar />
    </div>
  );
}
